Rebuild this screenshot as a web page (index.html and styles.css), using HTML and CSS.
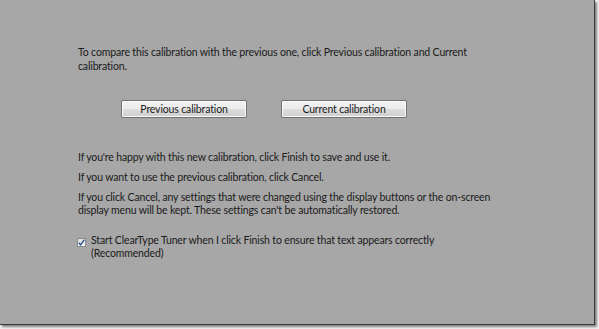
FILE: index.html
```html
<!DOCTYPE html>
<html>
<head>
<meta charset="utf-8">
<link rel="stylesheet" href="styles.css">
</head>
<body>
<div class="window">
  <p class="intro">To compare this calibration with the previous one, click Previous calibration and Current calibration.</p>
  <div class="buttons">
    <button class="btn">Previous calibration</button>
    <button class="btn">Current calibration</button>
  </div>
  <p class="line">If you're happy with this new calibration, click Finish to save and use it.</p>
  <p class="line">If you want to use the previous calibration, click Cancel.</p>
  <p class="line">If you click Cancel, any settings that were changed using the display buttons or the <span class="nowrap">on-screen</span> display menu will be kept. These settings can't be automatically restored.</p>
  <label class="check">
    <span class="box"><svg width="7" height="7" viewBox="0 0 7 7"><path d="M0.8 3.8 L2.6 5.8 L6.2 0.8" fill="none" stroke="#2a4f8a" stroke-width="1.4"/></svg></span>
    <span class="check-text">Start ClearType Tuner when I click Finish to ensure that text appears correctly (Recommended)</span>
  </label>
</div>
</body>
</html>
```
FILE: styles.css
```css
html, body {
  margin: 0;
  padding: 0;
  background: #f0f0f0;
  width: 599px;
  height: 329px;
  overflow: hidden;
}
.window {
  box-sizing: border-box;
  width: 595px;
  height: 325px;
  background: #a7a7a7;
  border-right: 1px solid #3a3a3a;
  border-bottom: 1px solid #3a3a3a;
  box-shadow: 2px 2px 2px rgba(0,0,0,0.45);
  padding: 45px 0 0 78px;
  font-family: Lato, sans-serif;
  font-size: 10.5px;
  letter-spacing: -0.15px;
  color: #1a1a1a;
}
p { margin: 0; }
.nowrap { white-space: nowrap; }
.intro {
  width: 425px;
  line-height: 14px;
}
.buttons {
  display: flex;
  gap: 34px;
  margin: 27px 0 0 43px;
}
.btn {
  box-sizing: border-box;
  width: 126px;
  height: 18px;
  padding: 0;
  border: 1px solid #707070;
  border-radius: 2px;
  background: linear-gradient(#f2f2f2 0%, #ebebeb 50%, #dddddd 51%, #cfcfcf 100%);
  box-shadow: inset 0 0 0 1px #fbfbfb;
  font-family: Lato, sans-serif;
  font-size: 10.5px;
  letter-spacing: -0.15px;
  color: #1a1a1a;
  line-height: 14px;
}
.line {
  width: 425px;
  line-height: 13px;
  margin-top: 7px;
}
.buttons + .line { margin-top: 33px; }
.check {
  display: flex;
  align-items: flex-start;
  gap: 5px;
  margin-top: 17px;
  line-height: 13px;
}
.box {
  box-sizing: border-box;
  width: 9px;
  height: 9px;
  margin-top: 4px;
  margin-left: -1px;
  border: 1px solid #8a8a8a;
  background: linear-gradient(#e0e0e0, #f6f6f6);
  display: flex;
  align-items: center;
  justify-content: center;
}
.check-text { width: 410px; }
```
